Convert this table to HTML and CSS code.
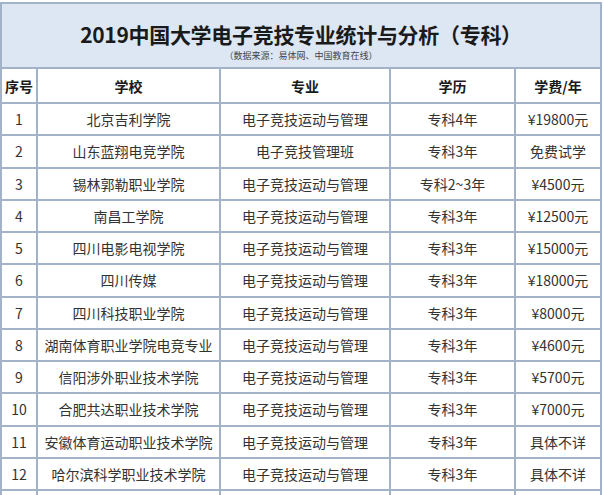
FILE: index.html
```html
<!DOCTYPE html>
<html lang="zh-CN">
<head>
<meta charset="utf-8">
<title>2019中国大学电子竞技专业统计与分析（专科）</title>
<link rel="stylesheet" href="styles.css">
</head>
<body>
<div class="sheet">
<table class="grid">
  <colgroup>
    <col class="c1"><col class="c2"><col class="c3"><col class="c4"><col class="c5">
  </colgroup>
  <thead>
    <tr class="title-row">
      <th colspan="5">
        <div class="title">2019中国大学电子竞技专业统计与分析（专科）</div>
        <div class="source">（数据来源：易体网、中国教育在线）</div>
      </th>
    </tr>
    <tr class="head-row">
      <th class="num">序号</th><th>学校</th><th>专业</th><th>学历</th><th>学费/年</th>
    </tr>
  </thead>
  <tbody>
    <tr><td>1</td><td>北京吉利学院</td><td>电子竞技运动与管理</td><td>专科4年</td><td>¥19800元</td></tr>
    <tr><td>2</td><td>山东蓝翔电竞学院</td><td>电子竞技管理班</td><td>专科3年</td><td>免费试学</td></tr>
    <tr><td>3</td><td>锡林郭勒职业学院</td><td>电子竞技运动与管理</td><td>专科2~3年</td><td>¥4500元</td></tr>
    <tr><td>4</td><td>南昌工学院</td><td>电子竞技运动与管理</td><td>专科3年</td><td>¥12500元</td></tr>
    <tr><td>5</td><td>四川电影电视学院</td><td>电子竞技运动与管理</td><td>专科3年</td><td>¥15000元</td></tr>
    <tr><td>6</td><td>四川传媒</td><td>电子竞技运动与管理</td><td>专科3年</td><td>¥18000元</td></tr>
    <tr><td>7</td><td>四川科技职业学院</td><td>电子竞技运动与管理</td><td>专科3年</td><td>¥8000元</td></tr>
    <tr><td>8</td><td>湖南体育职业学院电竞专业</td><td>电子竞技运动与管理</td><td>专科3年</td><td>¥4600元</td></tr>
    <tr><td>9</td><td>信阳涉外职业技术学院</td><td>电子竞技运动与管理</td><td>专科3年</td><td>¥5700元</td></tr>
    <tr><td>10</td><td>合肥共达职业技术学院</td><td>电子竞技运动与管理</td><td>专科3年</td><td>¥7000元</td></tr>
    <tr><td>11</td><td>安徽体育运动职业技术学院</td><td>电子竞技运动与管理</td><td>专科3年</td><td>具体不详</td></tr>
    <tr><td>12</td><td>哈尔滨科学职业技术学院</td><td>电子竞技运动与管理</td><td>专科3年</td><td>具体不详</td></tr>
    <tr class="cut"><td>&nbsp;</td><td>&nbsp;</td><td>&nbsp;</td><td>&nbsp;</td><td>&nbsp;</td></tr>
  </tbody>
</table>
</div>
</body>
</html>
```
FILE: styles.css
```css
html, body {
  margin: 0;
  padding: 0;
  background: #ffffff;
}
body {
  font-family: "Noto Sans CJK SC", "Noto Sans", sans-serif;
  color: #333333;
}
.sheet {
  padding-top: 2px;
  width: 600px;
}
.grid {
  border-collapse: collapse;
  table-layout: fixed;
  width: 600px;
}
.c1 { width: 36px; }
.c2 { width: 183px; }
.c3 { width: 170px; }
.c4 { width: 125px; }
.c5 { width: 86px; }
.grid th, .grid td {
  border: 2px solid #a3b3c7;
  text-align: center;
  padding: 0;
  white-space: nowrap;
  overflow: hidden;
}
.title-row th {
  background: #dce7f3;
  height: 63px;
  vertical-align: top;
}
.title {
  font-size: 21px;
  font-weight: bold;
  color: #1a1a1a;
  line-height: 30px;
  margin-top: 15px;
  letter-spacing: -0.3px;
}
.source {
  font-size: 9px;
  font-weight: normal;
  color: #444444;
  line-height: 13px;
}
.head-row th {
  height: 33px;
  font-size: 14px;
  font-weight: bold;
  color: #1a1a1a;
}
.grid td {
  height: 30.25px;
  font-size: 14px;
  color: #333333;
}
```
